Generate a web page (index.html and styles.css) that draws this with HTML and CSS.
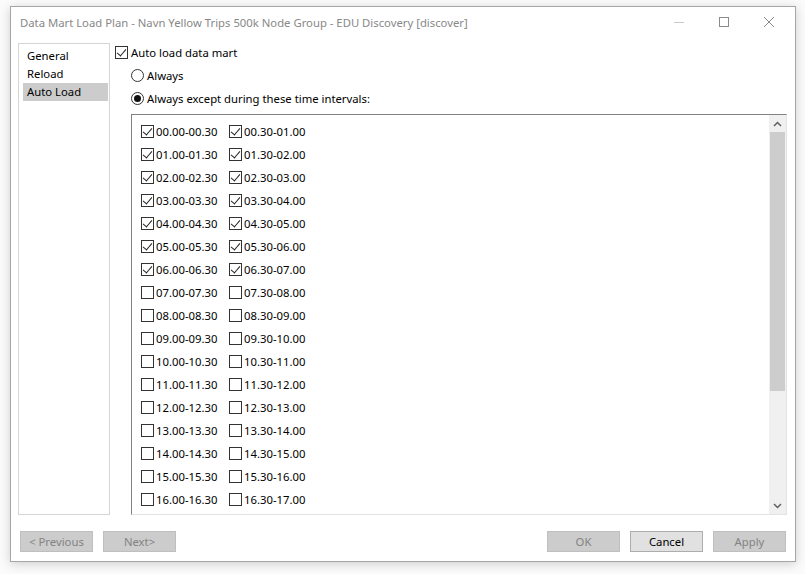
FILE: index.html
```html
<!DOCTYPE html>
<html>
<head>
<meta charset="utf-8">
<link rel="stylesheet" href="styles.css">
</head>
<body>
<div class="window">
  <div class="titlebar">
    <span class="title">Data Mart Load Plan - Navn Yellow Trips 500k Node Group - EDU Discovery [discover]</span>
    <div class="controls">
      <span class="ctl"><svg width="12" height="12" viewBox="0 0 12 12"><path d="M1 6.5h10" stroke="#c8c8c8" stroke-width="1"/></svg></span>
      <span class="ctl"><svg width="12" height="12" viewBox="0 0 12 12"><rect x="1.5" y="1.5" width="9" height="9" fill="none" stroke="#8a8a8a"/></svg></span>
      <span class="ctl"><svg width="12" height="12" viewBox="0 0 12 12"><path d="M1 1L11 11M11 1L1 11" stroke="#8a8a8a" stroke-width="1"/></svg></span>
    </div>
  </div>
  <div class="main">
    <div class="sidebar">
      <div class="item">General</div>
      <div class="item">Reload</div>
      <div class="item sel">Auto Load</div>
    </div>
    <div class="pane">
      <label class="opt top"><span class="cb on"></span>Auto load data mart</label>
      <label class="opt radio1"><span class="rb"></span>Always</label>
      <label class="opt radio2"><span class="rb on"></span>Always except during these time intervals:</label>
      <div class="listbox">
        <div class="grid">
          <div class="cell"><span class="cb on"></span>00.00-00.30</div><div class="cell"><span class="cb on"></span>00.30-01.00</div>
          <div class="cell"><span class="cb on"></span>01.00-01.30</div><div class="cell"><span class="cb on"></span>01.30-02.00</div>
          <div class="cell"><span class="cb on"></span>02.00-02.30</div><div class="cell"><span class="cb on"></span>02.30-03.00</div>
          <div class="cell"><span class="cb on"></span>03.00-03.30</div><div class="cell"><span class="cb on"></span>03.30-04.00</div>
          <div class="cell"><span class="cb on"></span>04.00-04.30</div><div class="cell"><span class="cb on"></span>04.30-05.00</div>
          <div class="cell"><span class="cb on"></span>05.00-05.30</div><div class="cell"><span class="cb on"></span>05.30-06.00</div>
          <div class="cell"><span class="cb on"></span>06.00-06.30</div><div class="cell"><span class="cb on"></span>06.30-07.00</div>
          <div class="cell"><span class="cb"></span>07.00-07.30</div><div class="cell"><span class="cb"></span>07.30-08.00</div>
          <div class="cell"><span class="cb"></span>08.00-08.30</div><div class="cell"><span class="cb"></span>08.30-09.00</div>
          <div class="cell"><span class="cb"></span>09.00-09.30</div><div class="cell"><span class="cb"></span>09.30-10.00</div>
          <div class="cell"><span class="cb"></span>10.00-10.30</div><div class="cell"><span class="cb"></span>10.30-11.00</div>
          <div class="cell"><span class="cb"></span>11.00-11.30</div><div class="cell"><span class="cb"></span>11.30-12.00</div>
          <div class="cell"><span class="cb"></span>12.00-12.30</div><div class="cell"><span class="cb"></span>12.30-13.00</div>
          <div class="cell"><span class="cb"></span>13.00-13.30</div><div class="cell"><span class="cb"></span>13.30-14.00</div>
          <div class="cell"><span class="cb"></span>14.00-14.30</div><div class="cell"><span class="cb"></span>14.30-15.00</div>
          <div class="cell"><span class="cb"></span>15.00-15.30</div><div class="cell"><span class="cb"></span>15.30-16.00</div>
          <div class="cell"><span class="cb"></span>16.00-16.30</div><div class="cell"><span class="cb"></span>16.30-17.00</div>
        </div>
        <div class="scroll">
          <div class="arrow"><svg width="9" height="6" viewBox="0 0 9 6"><path d="M1 5L4.5 1.5L8 5" fill="none" stroke="#606060" stroke-width="1.5"/></svg></div>
          <div class="track"><div class="thumb"></div></div>
          <div class="arrow"><svg width="9" height="6" viewBox="0 0 9 6"><path d="M1 1L4.5 4.5L8 1" fill="none" stroke="#606060" stroke-width="1.5"/></svg></div>
        </div>
      </div>
    </div>
  </div>
  <div class="footer">
    <div class="group">
      <button class="btn dis">&lt; Previous</button>
      <button class="btn dis">Next&gt;</button>
    </div>
    <div class="group">
      <button class="btn dis">OK</button>
      <button class="btn">Cancel</button>
      <button class="btn dis">Apply</button>
    </div>
  </div>
</div>
</body>
</html>
```
FILE: styles.css
```css
* { box-sizing: border-box; }
html, body { margin: 0; padding: 0; }
body {
  width: 805px;
  height: 574px;
  background: #fbfbfb;
  font-family: "Noto Sans", "Open Sans", sans-serif;
  font-size: 11.3px;
  color: #000;
  overflow: hidden;
}
.window {
  margin: 6px 0 0 10px;
  width: 786px;
  height: 556px;
  background: #fff;
  border: 1px solid #a6a6a6;
  box-shadow: 0 2px 10px rgba(0,0,0,0.18);
  display: flex;
  flex-direction: column;
}
.titlebar {
  height: 30px;
  display: flex;
  align-items: center;
  padding-left: 9px;
}
.title {
  color: #888;
  font-size: 11.3px;
  flex: 1;
  white-space: nowrap;
}
.controls { display: flex; height: 30px; align-items: center; }
.ctl {
  width: 45px;
  display: flex;
  justify-content: center;
  align-items: center;
}
.ctl:last-child { margin-right: 4px; }
.main {
  display: flex;
  padding: 6px 8px 0 7px;
  height: 479px;
}
.sidebar {
  width: 92px;
  height: 472px;
  border: 1px solid #d5d5d5;
  padding: 3px 1px 0 4px;
}
.item {
  height: 18px;
  line-height: 18px;
  padding-left: 4px;
}
.item.sel { background: #cccccc; }
.pane {
  flex: 1;
  display: flex;
  flex-direction: column;
  padding-left: 5px;
}
.opt {
  display: flex;
  align-items: center;
  height: 16px;
}
.top { margin-top: 1px; }
.radio1 { margin-left: 16px; margin-top: 7px; }
.radio2 { margin-left: 16px; margin-top: 7px; }
.cb {
  width: 13px;
  height: 13px;
  border: 1px solid #333;
  background: #fff;
  margin-right: 3px;
  position: relative;
  flex: none;
}
.cb.on::after {
  content: "";
  position: absolute;
  left: 3px;
  top: 0px;
  width: 4px;
  height: 8px;
  border-right: 1px solid #222;
  border-bottom: 1px solid #222;
  transform: rotate(40deg);
}
.rb {
  width: 13px;
  height: 13px;
  border: 1px solid #333;
  border-radius: 50%;
  margin-right: 3px;
  position: relative;
  flex: none;
}
.rb.on::after {
  content: "";
  position: absolute;
  left: 2px;
  top: 2px;
  width: 7px;
  height: 7px;
  border-radius: 50%;
  background: #111;
}
.listbox {
  margin-top: 8px;
  margin-left: 16px;
  height: 401px;
  border-top: 1px solid #828282;
  border-left: 1px solid #828282;
  border-right: 1px solid #e3e3e3;
  border-bottom: 1px solid #e3e3e3;
  display: flex;
  overflow: hidden;
}
.grid {
  flex: 1;
  display: grid;
  grid-template-columns: 88px 88px;
  grid-auto-rows: 23px;
  align-content: start;
  padding: 10px 0 0 9px;
  overflow: hidden;
}
.cell {
  display: flex;
  align-items: center;
  height: 13px;
  white-space: nowrap;
}
.cell .cb { margin-right: 2px; }
.scroll {
  width: 17px;
  background: #f0f0f0;
  display: flex;
  flex-direction: column;
}
.arrow {
  height: 17px;
  display: flex;
  align-items: center;
  justify-content: center;
}
.track { flex: 1; }
.thumb {
  height: 259px;
  margin: 0 1px;
  background: #cdcdcd;
}
.footer {
  display: flex;
  justify-content: space-between;
  padding: 15px 9px 0 9px;
}
.group { display: flex; gap: 10px; }
.btn {
  width: 73px;
  height: 21px;
  font-family: inherit;
  font-size: 11.3px;
  border: 1px solid #adadad;
  background: #e1e1e1;
  color: #000;
  padding: 0;
}
.btn.dis {
  background: #cccccc;
  border-color: #bfbfbf;
  color: #838383;
}
```
